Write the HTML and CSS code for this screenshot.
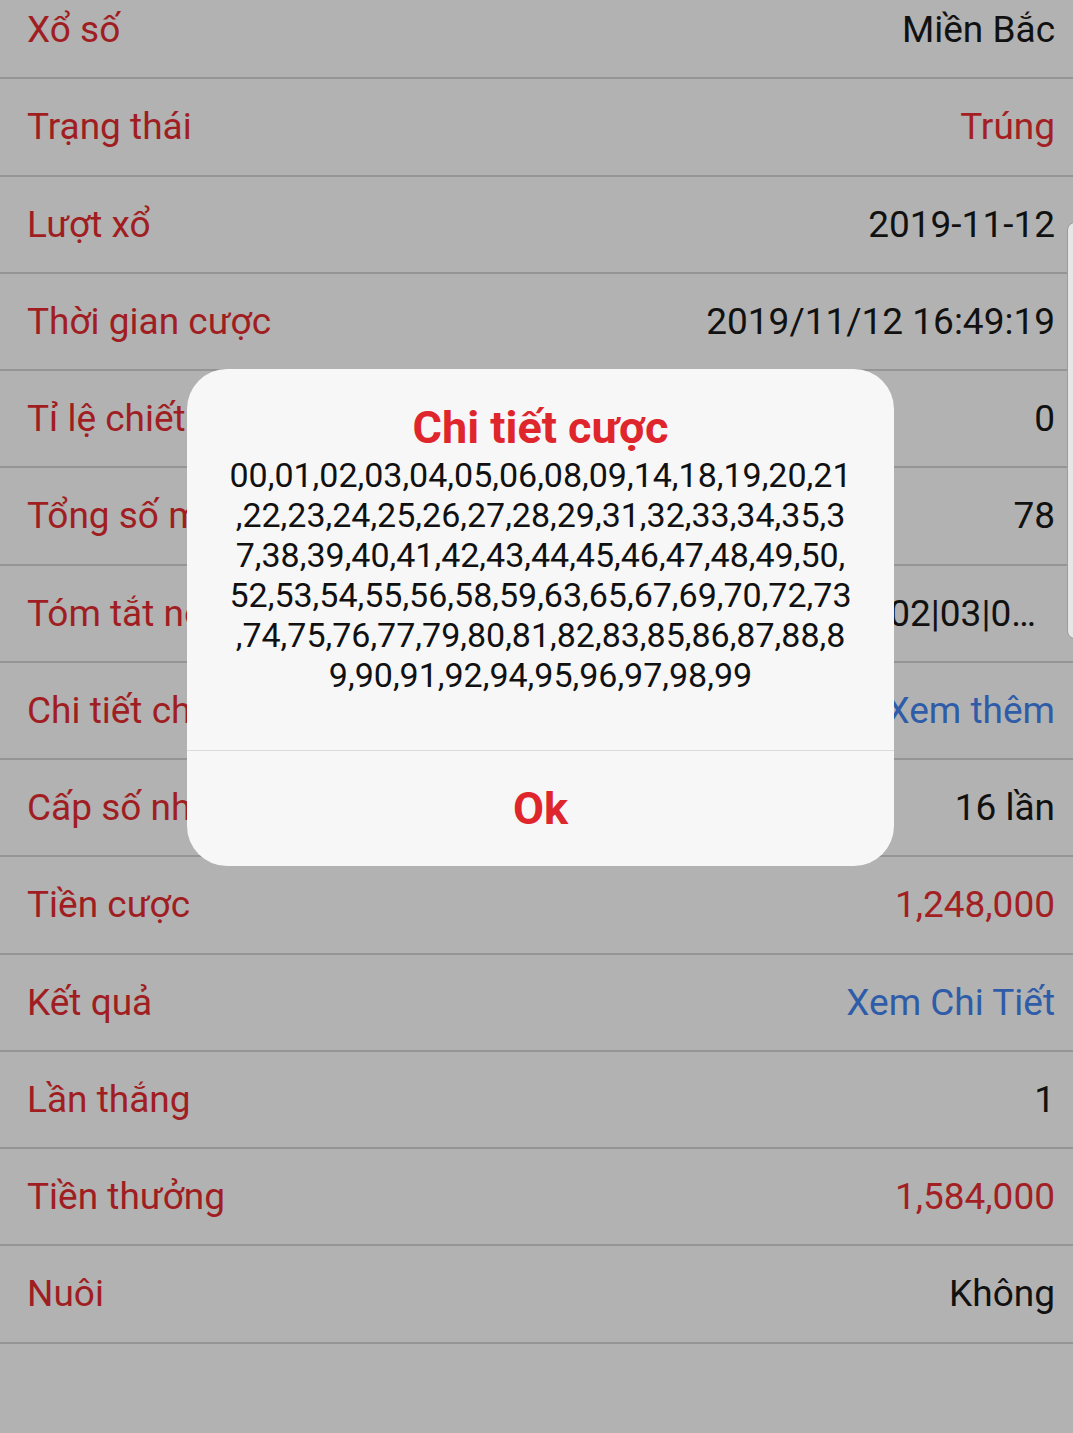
FILE: index.html
```html
<!DOCTYPE html>
<html lang="vi">
<head>
    <meta charset="UTF-8">
    <meta name="viewport" content="width=device-width, initial-scale=1.0">
    <title>Chi tiết cược</title>
    <link rel="stylesheet" href="styles.css">
</head>
<body>
    <div class="screen">
        <div class="detail-list">
            <div class="row"><span class="label">Xổ số</span><span class="value">Miền Bắc</span></div>
            <div class="row"><span class="label">Trạng thái</span><span class="value red">Trúng</span></div>
            <div class="row"><span class="label">Lượt xổ</span><span class="value">2019-11-12</span></div>
            <div class="row"><span class="label">Thời gian cược</span><span class="value">2019/11/12 16:49:19</span></div>
            <div class="row covered"><span class="label">Tỉ lệ chiết khấu</span><span class="value">0</span></div>
            <div class="row covered"><span class="label">Tổng số mã cược</span><span class="value">78</span></div>
            <div class="row covered"><span class="label">Tóm tắt nội dung</span><span class="value truncated">02|03|0…</span></div>
            <div class="row covered"><span class="label">Chi tiết cho cược</span><span class="value blue">Xem thêm</span></div>
            <div class="row covered"><span class="label">Cấp số nhân</span><span class="value">16 lần</span></div>
            <div class="row"><span class="label">Tiền cược</span><span class="value red">1,248,000</span></div>
            <div class="row"><span class="label">Kết quả</span><span class="value blue">Xem Chi Tiết</span></div>
            <div class="row"><span class="label">Lần thắng</span><span class="value">1</span></div>
            <div class="row"><span class="label">Tiền thưởng</span><span class="value red">1,584,000</span></div>
            <div class="row"><span class="label">Nuôi</span><span class="value">Không</span></div>
        </div>

        <!-- edge panel handle on the right side -->
        <div class="edge-handle"></div>

        <div class="dialog">
            <div class="dialog-body">
                <div class="dialog-title">Chi tiết cược</div>
                <div class="dialog-text">00,01,02,03,04,05,06,08,09,14,18,19,20,21<br>,22,23,24,25,26,27,28,29,31,32,33,34,35,3<br>7,38,39,40,41,42,43,44,45,46,47,48,49,50,<br>52,53,54,55,56,58,59,63,65,67,69,70,72,73<br>,74,75,76,77,79,80,81,82,83,85,86,87,88,8<br>9,90,91,92,94,95,96,97,98,99</div>
            </div>
            <div class="dialog-button">Ok</div>
        </div>
    </div>
</body>
</html>
```
FILE: styles.css
```css
body {
    margin: 0;
    font-family: Roboto, "Noto Sans", "Liberation Sans", sans-serif;
    background-color: #b2b2b2;
}
.screen {
    position: relative;
    width: 1073px;
    height: 1433px;
    overflow: hidden;
    background-color: #b2b2b2;
}
.detail-list {
    margin-top: -18px;
}
.row {
    display: flex;
    justify-content: space-between;
    align-items: center;
    height: 95.25px;
    padding: 0 18px 0 27px;
    border-bottom: 2px solid #959595;
    font-size: 37px;
    color: #111;
    white-space: nowrap;
}
.label {
    color: #a01e22;
}
/* rows partly hidden behind the dialog: clip the label at the dialog edge */
.row.covered .label {
    width: 160px;
    overflow: hidden;
}
.value.red {
    color: #a31f23;
}
.value.blue {
    color: #2f5ca8;
}
.value.truncated {
    margin-right: 19px;
}
.edge-handle {
    position: absolute;
    top: 222px;
    left: 1067px;
    width: 14px;
    height: 415px;
    background-color: #e6e6e6;
    border: 1px solid #9c9c9c;
    border-radius: 8px;
}
.dialog {
    position: absolute;
    top: 369px;
    left: 187px;
    width: 707px;
    height: 497px;
    display: flex;
    flex-direction: column;
    background-color: #f7f7f7;
    border-radius: 40px;
    overflow: hidden;
}
.dialog-body {
    height: 382px;
    padding-top: 32px;
    box-sizing: border-box;
    border-bottom: 1px solid #dcdcdc;
    text-align: center;
}
.dialog-title {
    font-size: 45px;
    font-weight: bold;
    line-height: 54px;
    color: #e0262d;
}
.dialog-text {
    font-size: 34px;
    line-height: 40px;
    color: #111;
}
.dialog-button {
    flex: 1;
    display: flex;
    align-items: center;
    justify-content: center;
    font-size: 45px;
    font-weight: bold;
    color: #e0262d;
}
```
